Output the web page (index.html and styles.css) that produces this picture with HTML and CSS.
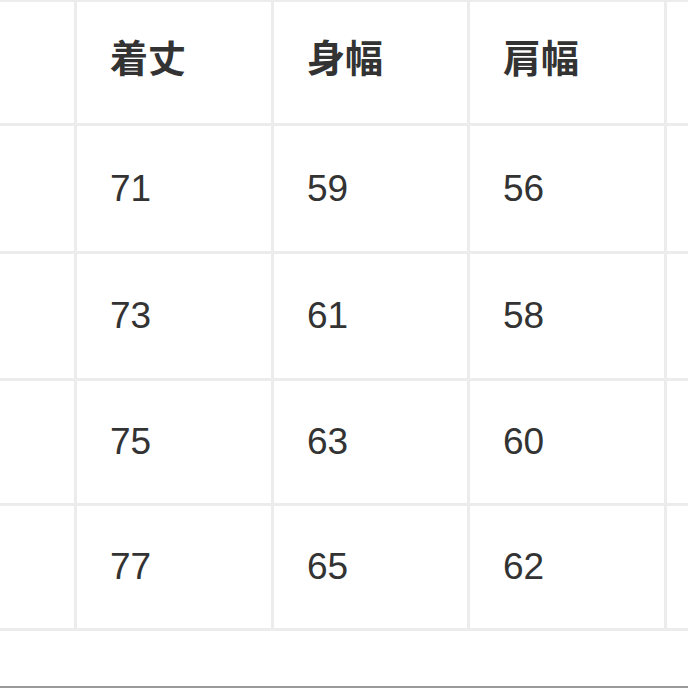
FILE: index.html
```html
<!DOCTYPE html>
<html lang="ja">
<head>
<meta charset="utf-8">
<title>サイズ表</title>
<link rel="stylesheet" href="styles.css">
</head>
<body>
<div class="page">
  <div class="table">
    <div class="cell head"></div>
    <div class="cell head">着丈</div>
    <div class="cell head">身幅</div>
    <div class="cell head">肩幅</div>
    <div class="cell head"></div>

    <div class="cell"></div>
    <div class="cell">71</div>
    <div class="cell">59</div>
    <div class="cell">56</div>
    <div class="cell"></div>

    <div class="cell"></div>
    <div class="cell">73</div>
    <div class="cell">61</div>
    <div class="cell">58</div>
    <div class="cell"></div>

    <div class="cell"></div>
    <div class="cell">75</div>
    <div class="cell">63</div>
    <div class="cell">60</div>
    <div class="cell"></div>

    <div class="cell"></div>
    <div class="cell">77</div>
    <div class="cell">65</div>
    <div class="cell">62</div>
    <div class="cell"></div>
  </div>
  <div class="spacer"></div>
  <div class="bottom-line"></div>
</div>
</body>
</html>
```
FILE: styles.css
```css
html, body {
  margin: 0;
  padding: 0;
  background: #ffffff;
}
.page {
  width: 688px;
  height: 688px;
  overflow: hidden;
  display: flex;
  flex-direction: column;
}
.table {
  display: grid;
  grid-template-columns: 74px 194px 193px 194px 1fr;
  grid-template-rows: 121px 125px 124px 122px 122px;
  column-gap: 3px;
  row-gap: 3px;
  padding: 2px 0 3px 0;
  background: #ececec;
}
.cell {
  background: #ffffff;
  display: flex;
  align-items: center;
  padding-left: 33px;
  font-family: "Liberation Sans", Arial, "Noto Sans CJK JP", sans-serif;
  font-size: 37px;
  color: #333333;
}
.cell.head {
  font-family: "Noto Sans CJK JP", "Noto Sans CJK SC", sans-serif;
  font-weight: 700;
  font-size: 38px;
  color: #333333;
  padding-bottom: 14px;
  box-sizing: border-box;
}
.spacer {
  flex: 1;
}
.bottom-line {
  height: 2px;
  background: #9a9a9a;
}
```
